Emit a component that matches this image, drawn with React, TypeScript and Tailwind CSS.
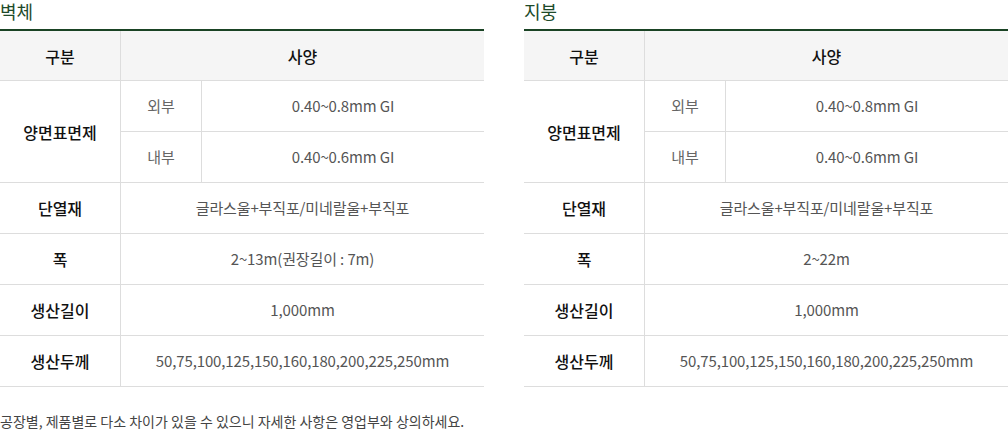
import React from "react";

type Spec = {
  title: string;
  width: string;
};

const specs: Spec[] = [
  { title: "벽체", width: "2~13m(권장길이 : 7m)" },
  { title: "지붕", width: "2~22m" },
];

function Row({ label, value }: { label: string; value: string }) {
  return (
    <div className="flex h-[51px] border-b border-[#dddddd]">
      <div className="flex w-[121px] items-center justify-center border-r border-[#dddddd] text-[16px] font-medium text-[#111]">
        {label}
      </div>
      <div className="flex flex-1 items-center justify-center text-[15px] tracking-[-0.13px] text-[#555]">
        {value}
      </div>
    </div>
  );
}

function SpecTable({ spec }: { spec: Spec }) {
  return (
    <div className="w-[484px]">
      <h3 className="h-[29px] text-[18px] leading-[22px] font-normal text-[#1d4a2a]">
        {spec.title}
      </h3>
      <div className="border-t-2 border-[#1a4324]">
        {/* header */}
        <div className="flex h-[50px] border-b border-[#dddddd] bg-[#f5f5f5] text-[16px] font-medium text-[#111]">
          <div className="flex w-[121px] items-center justify-center border-r border-[#dddddd]">
            구분
          </div>
          <div className="flex flex-1 items-center justify-center">사양</div>
        </div>

        {/* 양면표면제 */}
        <div className="flex border-b border-[#dddddd]">
          <div className="flex w-[121px] items-center justify-center border-r border-[#dddddd] text-[16px] font-medium text-[#111]">
            양면표면제
          </div>
          <div className="flex flex-1 flex-col">
            <div className="flex h-[51px] border-b border-[#dddddd]">
              <div className="flex w-[81px] items-center justify-center border-r border-[#dddddd] text-[15px] text-[#666]">
                외부
              </div>
              <div className="flex flex-1 items-center justify-center text-[15px] tracking-[-0.13px] text-[#555]">
                0.40~0.8mm GI
              </div>
            </div>
            <div className="flex h-[50px]">
              <div className="flex w-[81px] items-center justify-center border-r border-[#dddddd] text-[15px] text-[#666]">
                내부
              </div>
              <div className="flex flex-1 items-center justify-center text-[15px] tracking-[-0.13px] text-[#555]">
                0.40~0.6mm GI
              </div>
            </div>
          </div>
        </div>

        <Row label="단열재" value="글라스울+부직포/미네랄울+부직포" />
        <Row label="폭" value={spec.width} />
        <Row label="생산길이" value="1,000mm" />
        <Row label="생산두께" value="50,75,100,125,150,160,180,200,225,250mm" />
      </div>
    </div>
  );
}

export default function App() {
  return (
    <div
      className="w-[1008px] bg-white"
      style={{ fontFamily: '"Noto Sans CJK KR", "Noto Sans", sans-serif' }}
    >
      <div className="flex gap-10">
        {specs.map((s) => (
          <SpecTable key={s.title} spec={s} />
        ))}
      </div>
      <p className="mt-6 text-[14px] leading-5 text-[#444]">
        공장별, 제품별로 다소 차이가 있을 수 있으니 자세한 사항은 영업부와 상의하세요.
      </p>
    </div>
  );
}
